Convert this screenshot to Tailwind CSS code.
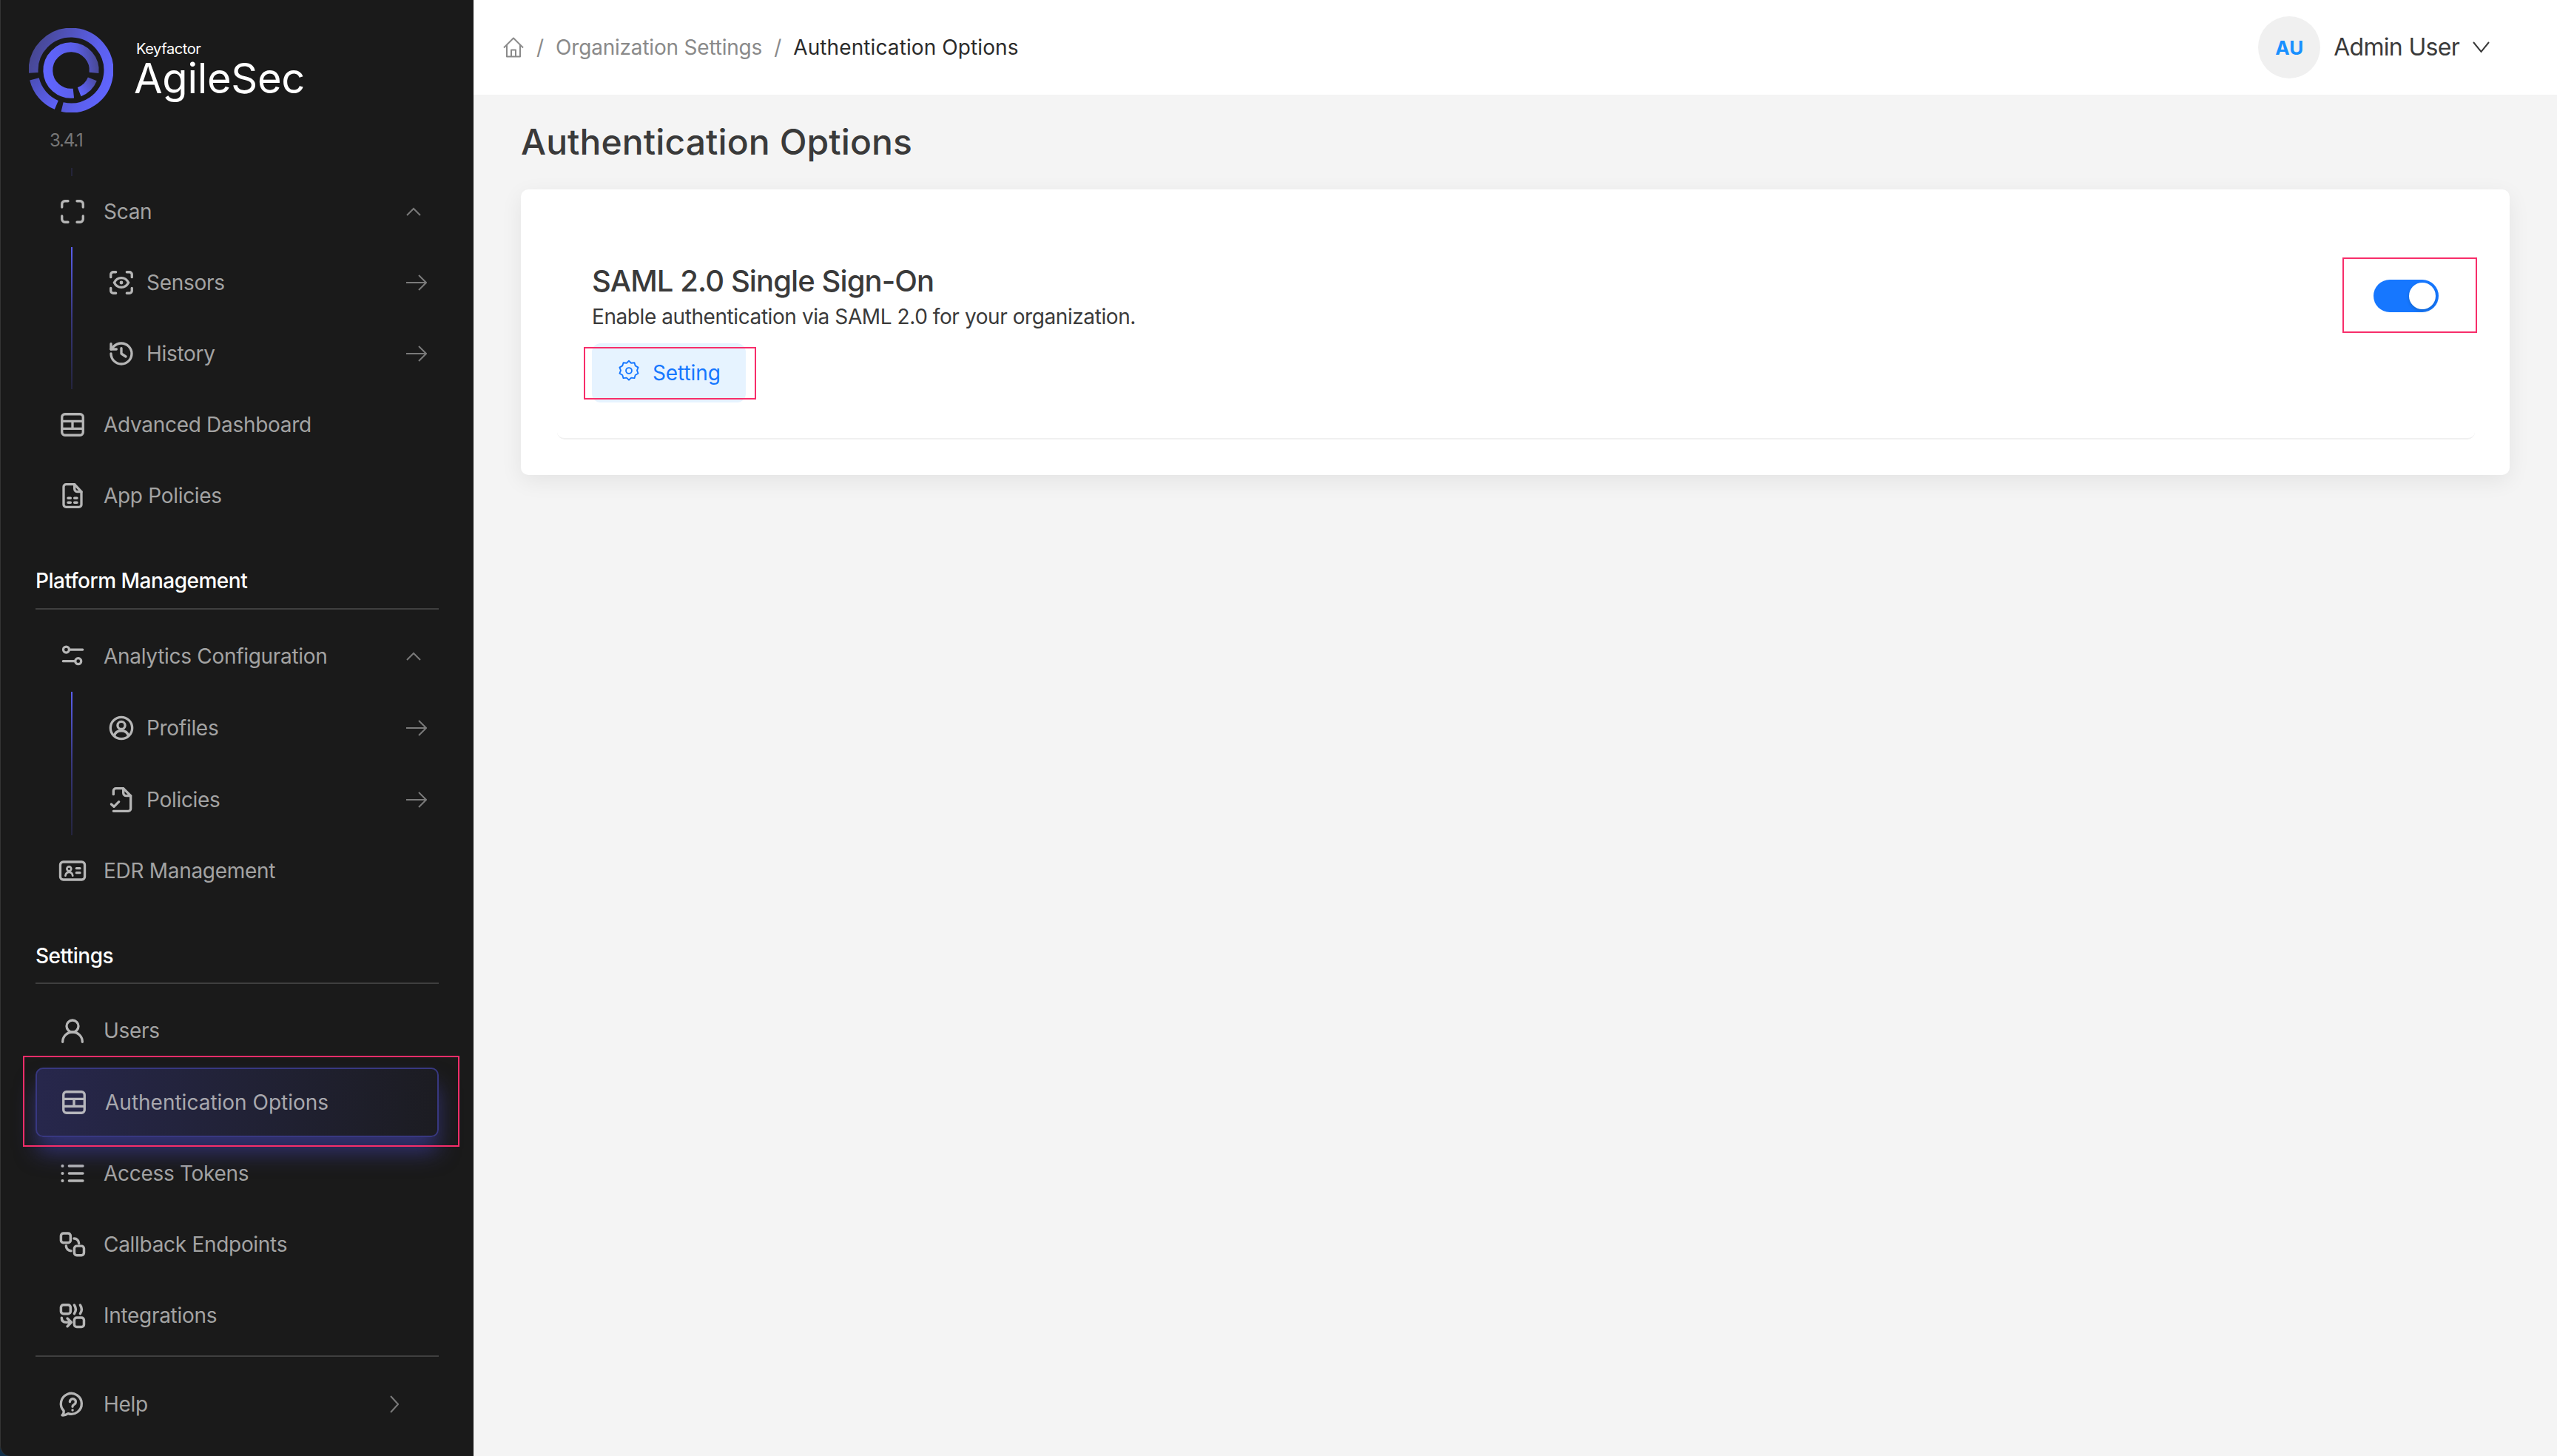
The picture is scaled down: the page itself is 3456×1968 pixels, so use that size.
<!DOCTYPE html>
<html lang="en">
<head>
<meta charset="UTF-8" />
<title>Authentication Options</title>
<script src="https://cdn.jsdelivr.net/npm/@tailwindcss/browser@4"></script>
</head>
<body class="bg-[#12304a] [font-family:Inter,sans-serif]">
<div class="flex h-[1968px] w-[3456px] overflow-hidden">
    <!-- sidebar -->
    <aside class="flex h-full w-[640px] shrink-0 flex-col rounded-bl-[14px] border-l border-[#343434] bg-[#1a1a1a]">
        <div class="h-[238px] shrink-0">
            <div class="flex pl-[38px] pt-[38px]">
                <svg class="h-[114px] w-[114px] shrink-0" viewBox="27 27 336 336" fill="none" stroke-width="38">
                    <defs>
                        <linearGradient id="ringOuter" gradientUnits="userSpaceOnUse" x1="30" y1="120" x2="360" y2="240"><stop offset="0" stop-color="#46468f"/><stop offset="0.7" stop-color="#5b5fea"/><stop offset="1" stop-color="#6065ff"/></linearGradient>
                        <linearGradient id="ringLow" gradientUnits="userSpaceOnUse" x1="40" y1="230" x2="140" y2="340"><stop offset="0" stop-color="#4c4fb8"/><stop offset="1" stop-color="#5f63fa"/></linearGradient>
                        <linearGradient id="ringInner" gradientUnits="userSpaceOnUse" x1="90" y1="200" x2="310" y2="170"><stop offset="0" stop-color="#6065ff"/><stop offset="0.6" stop-color="#5a5ee6"/><stop offset="1" stop-color="#47478f"/></linearGradient>
                        <linearGradient id="ringBit" gradientUnits="userSpaceOnUse" x1="228" y1="280" x2="300" y2="230"><stop offset="0" stop-color="#6065ff"/><stop offset="1" stop-color="#4a4a9c"/></linearGradient>
                    </defs>
                    <path d="M45.3 205A150 150 0 1 1 160 340.9" stroke="url(#ringOuter)"/>
                    <path d="M49 230A150 150 0 0 0 137 333.3" stroke="url(#ringLow)"/>
                    <path d="M205 286.5A92 92 0 1 1 286.5 205" stroke="url(#ringInner)"/>
                    <path d="M228 281A92 92 0 0 0 280 230" stroke="url(#ringBit)"/>
                </svg>
                <div class="ml-[28px] mt-[16px]">
                    <div class="pl-[3px] text-[20px] leading-[24px] tracking-[-0.4px] text-white">Keyfactor</div>
                    <div class="text-[56px] leading-[56px] tracking-[-0.3px] text-white">AgileSec</div>
                </div>
            </div>
            <div class="ml-[66px] mt-[23px] text-[24px] leading-[30px] tracking-[-1.2px] text-[#777777]">3.4.1</div>
            <div class="ml-[95px] mt-[22px] h-[11px] w-[2px] bg-[#24243a]"></div>
        </div>

        <nav class="flex flex-col px-[47px] text-[28px] tracking-[-0.3px] text-[#a3a3a3]">
            <a class="flex h-[96px] items-center pl-[34px]">
                <svg class="mr-[26px] h-8 w-8 shrink-0 text-[#b6b6b6]" viewBox="0 0 24 24" fill="none" stroke="currentColor" stroke-width="2.500" stroke-linecap="round"><path d="M1.300 7.500V4.300a3 3 0 0 1 3-3h3.200M16.500 1.300h3.200a3 3 0 0 1 3 3v3.200M22.700 16.500v3.200a3 3 0 0 1-3 3h-3.200M7.500 22.700H4.300a3 3 0 0 1-3-3v-3.200"/></svg>
                <span>Scan</span>
                <svg class="ml-auto mr-[24px] h-[12px] w-[20px] text-[#7a7a7a]" viewBox="0 0 20 12" fill="none" stroke="currentColor" stroke-width="2"><path d="M1 11l9-9 9 9"/></svg>
            </a>
            <div class="flex h-[192px]">
                <div class="ml-[48px] w-[2px] bg-gradient-to-b from-[#5a5ff0] via-[#38387f] to-[#24243e]"></div>
                <div class="flex-1 pl-[50px]">
                    <a class="flex h-[96px] items-center">
                        <svg class="mr-[18px] h-8 w-8 shrink-0 text-[#b6b6b6]" viewBox="0 0 24 24" fill="none" stroke="currentColor" stroke-width="2.500" stroke-linecap="round"><path d="M1.300 6.500V3.800a2.500 2.500 0 0 1 2.500-2.500h2.700M17.500 1.300h2.700a2.500 2.500 0 0 1 2.500 2.500v2.700M22.700 17.500v2.700a2.500 2.500 0 0 1-2.500 2.500h-2.700M6.500 22.700H3.800a2.500 2.500 0 0 1-2.500-2.500v-2.700"/><path d="M4.800 12c1.600-3.200 4-4.800 7.200-4.800s5.600 1.600 7.200 4.800c-1.600 3.200-4 4.800-7.200 4.800S6.400 15.200 4.800 12z"/><circle cx="12" cy="12" r="1.800" fill="currentColor" stroke="none"/></svg>
                        <span>Sensors</span>
                        <svg class="ml-auto mr-[16px] h-[24px] w-[28px] text-[#7a7a7a]" viewBox="0 0 28 24" fill="none" stroke="currentColor" stroke-width="2"><path d="M0 12h26M17 2l10 10-10 10"/></svg>
                    </a>
                    <a class="flex h-[96px] items-center">
                        <svg class="mr-[18px] h-8 w-8 shrink-0 text-[#b6b6b6]" viewBox="0 0 24 24" fill="none" stroke="currentColor" stroke-width="2.500" stroke-linecap="round" stroke-linejoin="round"><path d="M1.500 12a10.500 10.500 0 1 0 10.500-10.500 11 11 0 0 0-7.800 3.200L1.500 7.500"/><path d="M1.500 2v5.500H7"/><path d="M12 6.500V12l4.500 3"/></svg>
                        <span>History</span>
                        <svg class="ml-auto mr-[16px] h-[24px] w-[28px] text-[#7a7a7a]" viewBox="0 0 28 24" fill="none" stroke="currentColor" stroke-width="2"><path d="M0 12h26M17 2l10 10-10 10"/></svg>
                    </a>
                </div>
            </div>
            <a class="flex h-[96px] items-center pl-[34px]">
                <svg class="mr-[26px] h-8 w-8 shrink-0 text-[#b6b6b6]" viewBox="0 0 24 24" fill="none" stroke="currentColor" stroke-width="2.500"><rect x="1.300" y="1.300" width="21.400" height="21.400" rx="3"/><path d="M2 8.500h20M2 16h20M12 8.500V16"/></svg>
                <span>Advanced Dashboard</span>
            </a>
            <a class="flex h-[96px] items-center pl-[34px]">
                <svg class="mr-[26px] h-8 w-8 shrink-0 overflow-visible text-[#b6b6b6]" viewBox="0 0 24 24" fill="none" stroke="currentColor" stroke-width="2.500" stroke-linejoin="round" stroke-linecap="round"><path d="M5.500 0.500h8.500l7 7.500V21a2.500 2.500 0 0 1-2.500 2.500h-13A2.500 2.500 0 0 1 3 21V3a2.500 2.500 0 0 1 2.500-2.500z"/><path d="M14 0.500V5a3 3 0 0 0 3 3h4"/><path d="M7.500 14.500h2.500M14 14.500h2.500M7.500 19h2.500M14 19h2.500" stroke-width="2.600"/></svg>
                <span>App Policies</span>
            </a>

            <div class="flex h-[106px] items-end border-b-2 border-[#3f3f3f] pb-[19px] text-white">
                <h3 class="text-[28px] font-medium leading-[36px] tracking-[-0.5px]">Platform Management</h3>
            </div>

            <a class="mt-[15px] flex h-[96px] items-center pl-[34px]">
                <svg class="mr-[26px] h-8 w-8 shrink-0 text-[#b6b6b6]" viewBox="0 0 24 24" fill="none" stroke="currentColor" stroke-width="2.400" stroke-linecap="round"><circle cx="5.600" cy="5.300" r="3"/><path d="M8.800 5.300h13.500"/><circle cx="17.800" cy="17" r="3"/><path d="M2.500 17h12"/></svg>
                <span>Analytics Configuration</span>
                <svg class="ml-auto mr-[24px] h-[12px] w-[20px] text-[#7a7a7a]" viewBox="0 0 20 12" fill="none" stroke="currentColor" stroke-width="2"><path d="M1 11l9-9 9 9"/></svg>
            </a>
            <div class="flex h-[194px]">
                <div class="ml-[48px] w-[2px] bg-gradient-to-b from-[#5a5ff0] via-[#38387f] to-[#24243e]"></div>
                <div class="flex-1 pl-[50px]">
                    <a class="flex h-[97px] items-center">
                        <svg class="mr-[18px] h-8 w-8 shrink-0 overflow-visible text-[#b6b6b6]" viewBox="0 0 24 24" fill="none" stroke="currentColor" stroke-width="2.500"><circle cx="12" cy="12" r="11"/><circle cx="12" cy="9.300" r="3.800"/><path d="M5 20c.6-3.400 3.400-5.200 7-5.200s6.400 1.800 7 5.200"/></svg>
                        <span>Profiles</span>
                        <svg class="ml-auto mr-[16px] h-[24px] w-[28px] text-[#7a7a7a]" viewBox="0 0 28 24" fill="none" stroke="currentColor" stroke-width="2"><path d="M0 12h26M17 2l10 10-10 10"/></svg>
                    </a>
                    <a class="flex h-[97px] items-center">
                        <svg class="mr-[18px] h-8 w-8 shrink-0 overflow-visible text-[#b6b6b6]" viewBox="0 0 24 24" fill="none" stroke="currentColor" stroke-width="2.500" stroke-linecap="round" stroke-linejoin="round"><path d="M4 6.500V3a2.500 2.500 0 0 1 2.500-2.500H14l7.500 7.500v13a2.500 2.500 0 0 1-2.500 2.500H4"/><path d="M14 0.500V5a3 3 0 0 0 3 3h4.500"/><path d="M1.800 16.500l2.700 2.500 5-5"/></svg>
                        <span>Policies</span>
                        <svg class="ml-auto mr-[16px] h-[24px] w-[28px] text-[#7a7a7a]" viewBox="0 0 28 24" fill="none" stroke="currentColor" stroke-width="2"><path d="M0 12h26M17 2l10 10-10 10"/></svg>
                    </a>
                </div>
            </div>
            <a class="flex h-[96px] items-center pl-[34px]">
                <svg class="mr-[26px] h-8 w-8 shrink-0 overflow-visible text-[#b6b6b6]" viewBox="0 0 24 24" fill="none" stroke="currentColor" stroke-width="2.500" stroke-linecap="round"><rect x="-0.400" y="3" width="24.800" height="18" rx="3"/><circle cx="8.500" cy="10" r="2.200" stroke-width="2"/><path d="M4.800 17c.4-2.400 1.800-3.600 3.700-3.600s3.300 1.200 3.700 3.600" stroke-width="2"/><path d="M16 9.500h3.500M16 14h3.500"/></svg>
                <span>EDR Management</span>
            </a>

            <div class="flex h-[105px] items-end border-b-2 border-[#3f3f3f] pb-[18px] text-white">
                <h3 class="text-[28px] font-medium leading-[36px] tracking-[-0.5px]">Settings</h3>
            </div>

            <a class="mt-[15px] flex h-[96px] items-center pl-[34px]">
                <svg class="mr-[26px] h-8 w-8 shrink-0 overflow-visible text-[#b6b6b6]" viewBox="0 0 24 24" fill="none" stroke="currentColor" stroke-width="2.500" stroke-linecap="round"><circle cx="12" cy="7.500" r="6"/><path d="M2 23.500c0-5.500 4.400-10 10-10s10 4.500 10 10"/></svg>
                <span>Users</span>
            </a>
            <div class="relative mt-[2px]">
                <a class="flex h-[94px] items-center rounded-[10px] border-2 border-[#383881] bg-gradient-to-r from-[#27274c] to-[#1c1c22] pl-[34px] tracking-normal text-[#a8a8ae] shadow-[0_22px_30px_-2px_rgba(70,70,190,0.55)]">
                    <svg class="mr-[26px] h-8 w-8 shrink-0 text-[#b6b6bc]" viewBox="0 0 24 24" fill="none" stroke="currentColor" stroke-width="2.500"><rect x="1.300" y="1.300" width="21.400" height="21.400" rx="3"/><path d="M2 8.500h20M2 16h20M12 8.500V16"/></svg>
                    <span>Authentication Options</span>
                </a>
                <div class="pointer-events-none absolute -bottom-[13px] -left-[17px] -right-[28px] -top-[16px] border-2 border-[#f72d6a]"></div>
            </div>
            <a class="mt-px flex h-[96px] items-center pl-[34px]">
                <svg class="mr-[26px] h-8 w-8 shrink-0 text-[#b6b6b6]" viewBox="0 0 24 24" fill="none" stroke="currentColor" stroke-width="2.500" stroke-linecap="round"><path d="M8.500 4.500H22.500M8.500 12H22.500M8.500 19.500H22.500"/><path d="M1.800 4.500h.1M1.800 12h.1M1.800 19.500h.1" stroke-width="3"/></svg>
                <span>Access Tokens</span>
            </a>
            <a class="flex h-[96px] items-center pl-[34px]">
                <svg class="mr-[26px] h-8 w-8 shrink-0 overflow-visible text-[#b6b6b6]" viewBox="0 0 24 24" fill="none" stroke="currentColor" stroke-width="2.600" stroke-linecap="round"><rect x="0.300" y="0.800" width="9.700" height="9.500" rx="2.500"/><rect x="13.800" y="13.600" width="9.800" height="9.400" rx="2.500"/><path d="M13.500 6a5 5 0 0 1 5 5M5.500 13.500a5 5 0 0 0 5 5"/></svg>
                <span>Callback Endpoints</span>
            </a>
            <a class="flex h-[96px] items-center pl-[34px]">
                <svg class="mr-[26px] h-8 w-8 shrink-0 overflow-visible text-[#b6b6b6]" viewBox="0 0 24 24" fill="none" stroke="currentColor" stroke-width="2.600" stroke-linecap="round" stroke-linejoin="round"><rect x="0.300" y="1.300" width="9.700" height="9" rx="2.500"/><rect x="13.800" y="14.200" width="9.800" height="9.400" rx="2.500"/><path d="M13.800 1.500c1.800 2.600 1.800 6 0 8.700M19.800 1.500c1.800 2.600 1.800 6 0 8.700"/><path d="M1 14.500c0 3 1.800 4.500 4.500 4.500H10M6.800 15l4 4-4 4"/></svg>
                <span>Integrations</span>
            </a>
            <div class="mt-[6px] h-[2px] bg-[#3f3f3f]"></div>
            <a class="mt-[16px] flex h-[96px] items-center pl-[34px]">
                <svg class="mr-[26px] h-8 w-8 shrink-0 overflow-visible text-[#b6b6b6]" viewBox="0 0 24 24" fill="none" stroke="currentColor" stroke-width="2.500" stroke-linecap="round" stroke-linejoin="round"><path d="M1.500 23.200c1-1 1.800-2.800 1.600-4.500A10.500 10.500 0 1 1 7.500 21.500c-2 1.300-4 1.900-6 1.700z"/><path d="M9.300 9.500a3 3 0 1 1 4.500 2.600c-1.200.7-1.800 1.300-1.800 2.400"/><path d="M12 18h.1"/></svg>
                <span>Help</span>
                <svg class="ml-auto mr-[54px] h-[24px] w-[12px] text-[#7a7a7a]" viewBox="0 0 12 24" fill="none" stroke="currentColor" stroke-width="2"><path d="M1 1l10 11L1 23"/></svg>
            </a>
        </nav>
    </aside>

    <!-- main -->
    <div class="flex h-full flex-1 flex-col bg-[#f4f4f4]">
        <header class="flex h-[128px] shrink-0 items-center bg-white pl-[40px] pr-[91px] text-[28px]">
            <svg class="h-[28px] w-[28px] text-[#8a8a8a]" viewBox="0 0 28 28" fill="none" stroke="currentColor" stroke-width="2" stroke-linejoin="round"><path d="M1 14.500L14 1.500l13 13M5 11v15.500h18V11"/><path d="M11 26.500v-9h6v9"/></svg>
            <span class="ml-[17px] text-[#8a8a8a]">/</span>
            <span class="ml-[16px] tracking-[-0.2px] text-[#8a8a8a]">Organization Settings</span>
            <span class="ml-[16px] text-[#8a8a8a]">/</span>
            <span class="ml-[16px] tracking-[0.1px] text-[#2b2b2b]">Authentication Options</span>
            <div class="ml-auto flex items-center">
                <div class="flex h-[84px] w-[84px] items-center justify-center rounded-full bg-[#f0f0f0] text-[26px] font-bold text-[#1890ff]">AU</div>
                <span class="ml-[18px] text-[32px] tracking-[-0.7px] text-[#3a3a3a]">Admin User</span>
                <svg class="ml-[18px] h-[16px] w-[23px] text-[#3a3a3a]" viewBox="0 0 23 16" fill="none" stroke="currentColor" stroke-width="2"><path d="M1 1l10.500 13L22 1"/></svg>
            </div>
        </header>
        <main class="pl-[64px] pr-[64px]">
            <h1 class="mt-[34px] text-[48px] font-medium leading-[60px] tracking-[0.1px] text-[#3a3a3a]">Authentication Options</h1>
            <section class="mt-[34px] h-[386px] rounded-[10px] bg-white pl-[49px] pr-[47px] pt-[99px] shadow-[0_8px_30px_rgba(0,0,0,0.07)]">
                <div class="flex items-start justify-between rounded-b-[10px] border-b-2 border-[#f0f0f0] pb-[48px] pl-[47px] pr-[49px]">
                    <div>
                        <h2 class="text-[40px] font-medium leading-[50px] tracking-[-0.9px] text-[#3a3a3a]">SAML 2.0 Single Sign-On</h2>
                        <p class="mt-[5px] text-[28px] leading-[36px] tracking-[-0.42px] text-[#3a3a3a]">Enable authentication via SAML 2.0 for your organization.</p>
                        <div class="relative mt-[18px] w-[208px]">
                            <button class="flex h-[80px] w-[208px] items-center rounded-[12px] bg-[#e6f3ff] pl-[36px] text-[28px] tracking-[-0.1px] text-[#1677ff]">
                                <svg class="-mt-[6px] mr-[18px] h-[30px] w-[28px]" viewBox="0 0 27 28" fill="none" stroke="currentColor" stroke-width="1.800" stroke-linejoin="round"><path d="M13.500 1.200l3 2.900 4.200-.5 1.200 4 3.700 2.200-1.500 3.900 1.500 3.900-3.700 2.200-1.200 4-4.200-.5-3 2.900-3-2.900-4.200.5-1.200-4-3.700-2.200 1.500-3.900-1.500-3.900 3.700-2.200 1.200-4 4.200.5z"/><circle cx="13.500" cy="14" r="3.800"/></svg>
                                <span>Setting</span>
                            </button>
                            <div class="pointer-events-none absolute -left-[11px] -right-[14px] bottom-[4px] top-[5px] border-2 border-[#f72d6a]"></div>
                        </div>
                    </div>
                    <div class="relative mt-[23px]">
                        <div class="flex h-[44px] w-[88px] items-center justify-end rounded-full bg-[#1677ff] pr-[4px]">
                            <div class="h-[36px] w-[36px] rounded-full bg-white shadow-[0_2px_4px_rgba(0,35,11,0.2)]"></div>
                        </div>
                        <div class="pointer-events-none absolute -bottom-[28px] -left-[42px] -right-[52px] -top-[30px] border-2 border-[#f72d6a]"></div>
                    </div>
                </div>
            </section>
        </main>
    </div>
</div>
</body>
</html>
